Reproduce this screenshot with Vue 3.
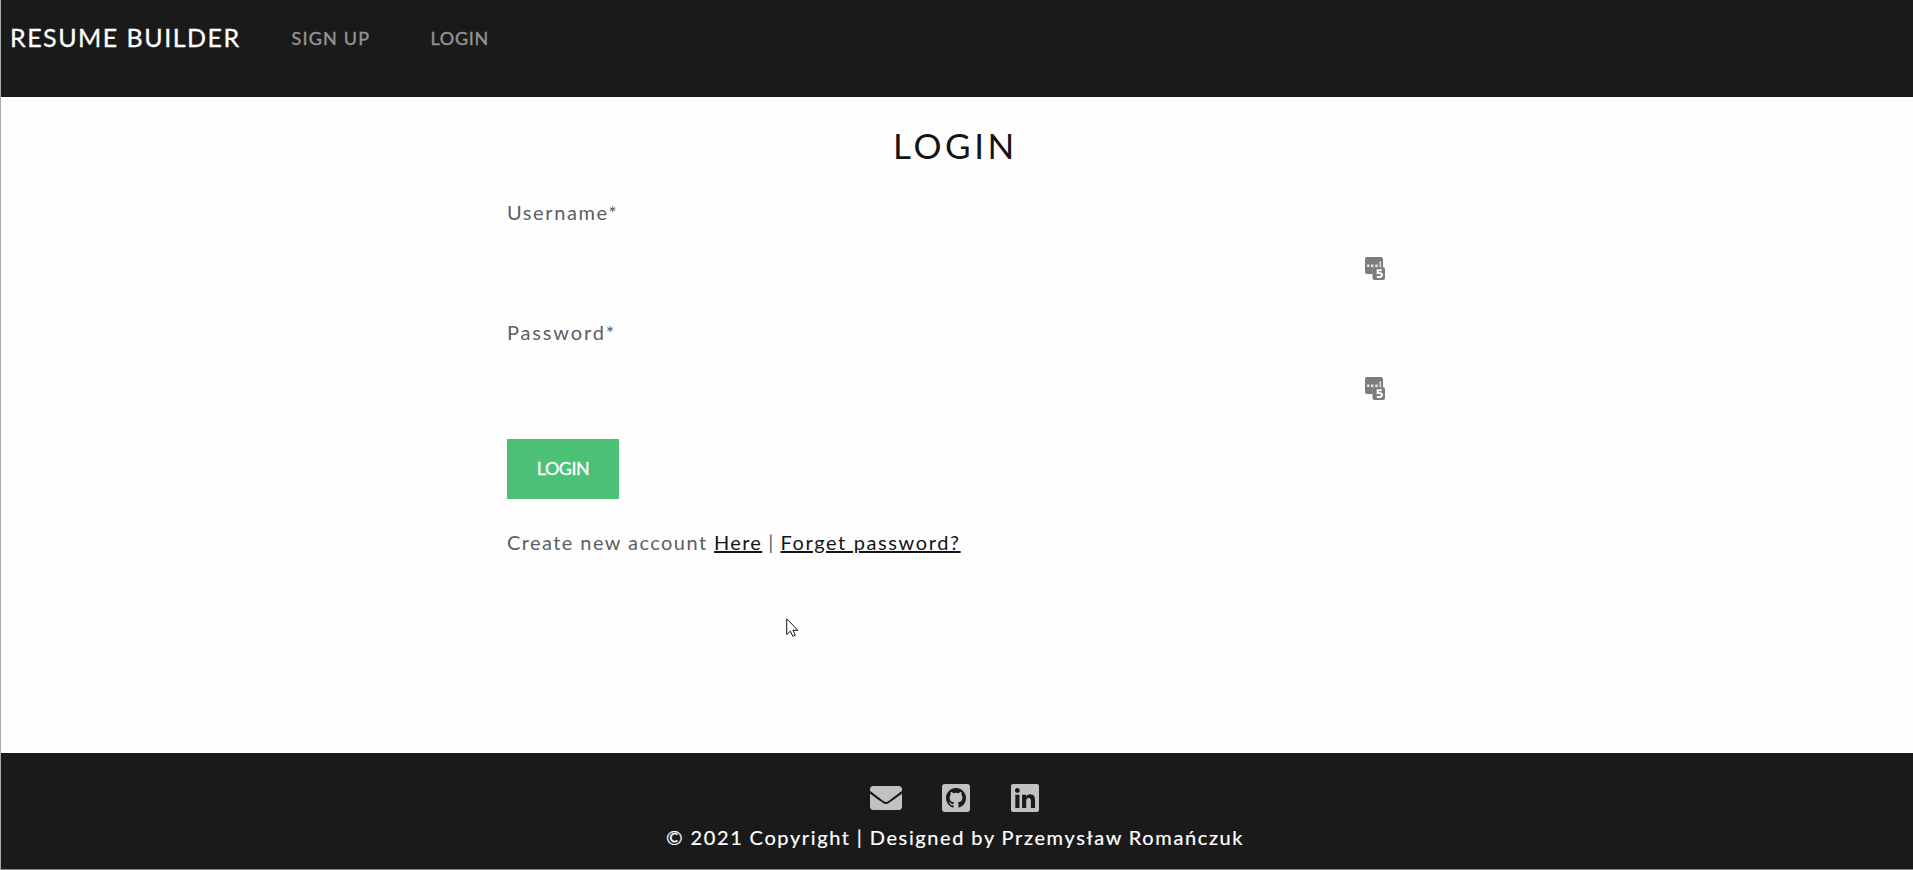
<script setup>
const fields = [
  { id: 'username', label: 'Username*', type: 'text' },
  { id: 'password', label: 'Password*', type: 'password' },
]
</script>

<template>
  <div class="page">
    <header class="navbar">
      <a class="brand">RESUME BUILDER</a>
      <nav class="links">
        <a class="signup">SIGN UP</a>
        <a class="signin">LOGIN</a>
      </nav>
    </header>

    <main class="content">
      <h1 class="title">LOGIN</h1>
      <form class="form" @submit.prevent>
        <div v-for="f in fields" :key="f.id" class="field">
          <label :for="f.id" :class="f.id">{{ f.label }}</label>
          <div class="control">
            <input :id="f.id" :type="f.type" />
            <svg class="key" viewBox="0 0 20 23" width="20" height="23">
              <path fill="#7c7c7c" d="M2 0h14q2 0 2 2v8q2 .2 2 2v9q0 2-2 2h-8.500q-2 0-2-2v-4H2q-2 0-2-2V2Q0 0 2 0z" />
              <path fill="none" stroke="#939393" stroke-width=".6" d="M18 10H9.500Q7.500 10 7.500 12v5" />
              <path fill="#e4e4e4" d="M2 7.500h2.400v2.400H2zM6 7.500h2.400v2.400H6zM10.300 7.500h2.400v2.400h-2.400zM14.600 4.500h1.500v5.500h-1.500z" />
              <path fill="none" stroke="#fff" stroke-width="2" d="M16.800 13.200h-4.200v2.900q4.400-.5 4.400 1.900 0 2.600-5.200 1.800" />
            </svg>
          </div>
        </div>
        <button class="submit">LOGIN</button>
      </form>
      <p class="account"><span class="create">Create new account</span> <a class="here">Here</a><span class="bar"> | </span><a class="forget">Forget password?</a></p>
    </main>

    <svg class="cursor" viewBox="0 0 13 20" width="13" height="20">
      <path d="M.7.800V16.500L4.400 13.200 6.800 18.300 9.300 17.200 7 12.300H11.900z" fill="#fff" stroke="#15151f" stroke-width="1" />
    </svg>

    <footer class="footer">
      <div class="social">
        <svg class="mail" viewBox="0 0 512 384" width="32" height="24">
          <path fill="#c1c1c1" d="M502.300 126.800c3.900-3.100 9.700-.2 9.700 4.700V336c0 26.500-21.500 48-48 48H48c-26.500 0-48-21.500-48-48V131.600c0-5 5.700-7.800 9.700-4.700 22.400 17.400 52.100 39.500 154.100 113.600 21.100 15.400 56.700 47.800 92.200 47.600 35.700.3 72-32.800 92.300-47.600 102-74.100 131.600-96.300 154-113.700zM256 256c23.200.4 56.600-29.200 73.400-41.400 132.700-96.300 142.800-104.700 173.400-128.700 5.800-4.500 9.200-11.500 9.200-18.900V48c0-26.500-21.500-48-48-48H48C21.500 0 0 21.500 0 48v19c0 7.400 3.400 14.300 9.200 18.900 30.600 23.900 40.700 32.400 173.400 128.700 16.800 12.200 50.200 41.800 73.400 41.400z" />
        </svg>
        <svg class="github" viewBox="0 0 28 28" width="28" height="28">
          <rect width="28" height="28" rx="3" fill="#c1c1c1" />
          <path fill="#1a1a1a" transform="translate(4 4) scale(1.250)" d="M8 0C3.580 0 0 3.580 0 8c0 3.540 2.290 6.530 5.470 7.590.4.070.55-.17.55-.38 0-.19-.01-.82-.01-1.490-2.010.37-2.530-.49-2.690-.94-.09-.23-.48-.94-.82-1.130-.28-.15-.68-.52-.01-.53.63-.01 1.080.58 1.230.82.72 1.210 1.870.87 2.330.66.07-.52.28-.87.51-1.070-1.780-.2-3.640-.89-3.640-3.950 0-.87.31-1.590.82-2.150-.08-.2-.36-1.020.08-2.120 0 0 .67-.21 2.200.82a7.600 7.600 0 0 1 4 0c1.530-1.040 2.200-.82 2.200-.82.44 1.100.16 1.920.08 2.120.51.56.82 1.270.82 2.150 0 3.070-1.870 3.750-3.650 3.950.29.25.54.73.54 1.480 0 1.070-.01 1.930-.01 2.200 0 .21.15.46.55.38A8.010 8.010 0 0 0 16 8c0-4.420-3.580-8-8-8z" />
        </svg>
        <svg class="linkedin" viewBox="0 0 448 448" width="28" height="28">
          <path fill="#c1c1c1" d="M416 0H31.900C14.300 0 0 14.500 0 32.300v383.400C0 433.500 14.300 448 31.900 448H416c17.600 0 32-14.500 32-32.300V32.300C448 14.500 433.600 0 416 0zM135.400 384H69V170.200h66.500V384zm-33.200-243c-21.300 0-38.500-17.300-38.500-38.500S80.900 64 102.200 64c21.200 0 38.500 17.300 38.500 38.500 0 21.300-17.200 38.500-38.500 38.500zm282.100 243h-66.400V280c0-24.800-.5-56.700-34.500-56.700-34.600 0-39.900 27-39.900 54.900V384h-66.400V170.200h63.700v29.200h.9c8.900-16.800 30.600-34.500 62.900-34.500 67.200 0 79.700 44.300 79.700 101.900V384z" />
        </svg>
      </div>
      <p class="copy">© 2021 Copyright | Designed by Przemysław Romańczuk</p>
    </footer>
  </div>
</template>

<style>
body { margin: 0; background: #fefefe; }
</style>

<style scoped>
* { box-sizing: border-box; }
.page {
  position: relative;
  display: flex;
  flex-direction: column;
  height: 870px;
  overflow: hidden;
  border-left: 1px solid #a9a9a9;
  border-bottom: 1px solid #858585;
  background: #fefefe;
  color: #5a5f63;
  font-family: Lato, "Noto Sans", sans-serif;
  font-size: 20px;
  white-space: nowrap;
}
.navbar {
  display: flex;
  align-items: flex-start;
  height: 97px;
  padding: 17px 0 0 9px;
  background: #1a1a1a;
  line-height: 40px;
}
.brand { width: 281.500px; color: #fff; font-size: 25px; letter-spacing: 1.5px; -webkit-text-stroke: 0.3px; }
.links { display: flex; padding-top: 1px; color: #949494; font-size: 18px; line-height: 41px; -webkit-text-stroke: 0.4px; }
.signup { width: 139px; letter-spacing: 1.2px; }
.signin { letter-spacing: 0.7px; }
.content { flex: 1; width: 899px; margin-left: 506px; }
.title {
  margin: 0;
  padding: 23px 0 0 386px;
  color: #141414;
  font-size: 35px;
  font-weight: 400;
  line-height: 50px;
  letter-spacing: 3.6px;
}
.form { display: flex; flex-direction: column; align-items: flex-start; padding-top: 22px; }
.field { width: 899px; height: 120px; line-height: 40px; }
.field label { display: block; height: 41px; }
.username { letter-spacing: 1.6px; }
.password { letter-spacing: 1.85px; }
.control { display: flex; align-items: center; height: 70px; }
.control input { flex: 1; height: 50px; border: 0; outline: 0; background: transparent; }
.key { margin-right: 21px; }
.submit {
  width: 112px;
  height: 60px;
  margin-top: 7px;
  padding: 0 0 2px 0;
  border: 0;
  background: #4cc075;
  color: #fff;
  font: 400 18px/58px Lato, sans-serif;
  letter-spacing: -0.5px;
  -webkit-text-stroke: 0.3px;
}
.account { margin: 23px 0 0; line-height: 40px; letter-spacing: 1.43px; }
.account a { color: #141414; text-decoration: underline; text-decoration-thickness: 2px; text-underline-offset: 1px; }
.here { letter-spacing: 1.3px; }
.bar { letter-spacing: 1px; }
.account .forget { letter-spacing: 1.62px; }
.cursor { position: absolute; left: 785px; top: 618px; }
.footer { height: 116px; background: #1a1a1a; }
.social { display: flex; align-items: center; height: 59px; padding: 31px 0 0 869px; }
.github { margin-left: 40px; }
.linkedin { margin-left: 41px; }
.copy { margin: 0; padding: 5px 0 0 665px; color: #fff; line-height: 40px; letter-spacing: 1.62px; word-spacing: -0.5px; -webkit-text-stroke: 0.2px; }
</style>
